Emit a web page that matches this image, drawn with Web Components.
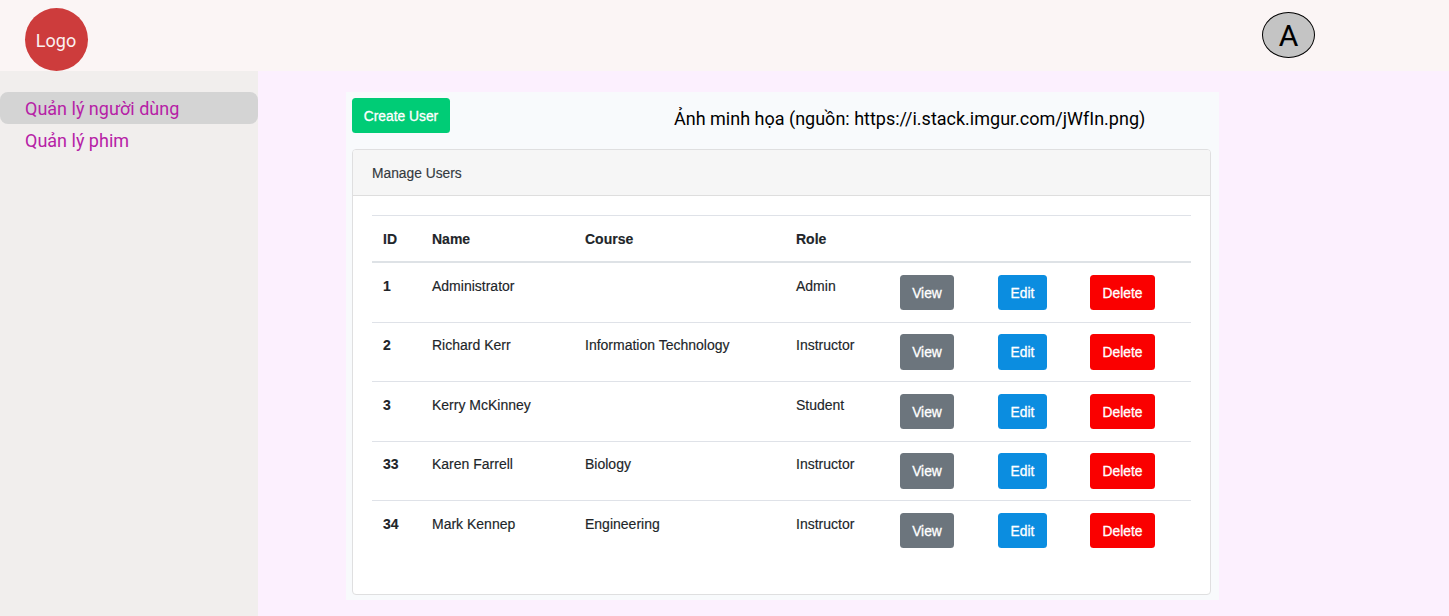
<!DOCTYPE html>
<html lang="vi">
<head>
<meta charset="utf-8">
<title>Quản lý người dùng</title>
<style>
html,body{margin:0;height:100%;overflow:hidden}
body{font-family:Roboto,"Noto Sans",sans-serif;font-size:18px}
</style>
</head>
<body>
<admin-app></admin-app>
<script>
const define = (name, html) => customElements.define(name, class extends HTMLElement {
  constructor() {
    super();
    const t = document.createElement('template');
    t.innerHTML = html;
    this.attachShadow({ mode: 'open' }).append(t.content.cloneNode(true));
  }
});

define('app-header', `
<style>
:host{box-sizing:border-box;display:flex;justify-content:space-between;align-items:flex-start;height:71px;padding:8px 134px 0 25px;background:#fbf5f5}
.logo{width:63px;height:63px;border-radius:50%;background:#cd3c3c;color:#fbf0f0;display:flex;align-items:center;justify-content:center;line-height:21px}
.logo span{padding:1px 1px 0 0}
.avatar{box-sizing:border-box;width:53px;height:46px;margin-top:4px;border:1px solid #000;border-radius:50%;background:#c4c4c4;color:#000;display:flex;align-items:center;justify-content:center;font-size:30px;line-height:44px;-webkit-text-stroke:.1px #000}
.avatar span{padding-top:1px}
</style>
<div class="logo"><span>Logo</span></div>
<div class="avatar"><span>A</span></div>`);

define('side-nav', `
<style>:host{display:block;box-sizing:border-box;width:258px;padding-top:21px;background:#f1eeed}</style>
<slot></slot>`);

define('nav-item', `
<style>
:host{display:block;box-sizing:border-box;height:32px;padding:1px 0 0 25px;line-height:32px;color:#b621a6;border-radius:8px;white-space:nowrap}
:host([active]){background:#d4d4d4}
</style>
<slot></slot>`);

define('action-button', `
<style>
:host{display:inline-flex;box-sizing:border-box;align-items:center;justify-content:center;height:35.5px;padding-top:2px;border-radius:3.5px;color:#fff;background:#6c757d;font-size:13.8px;-webkit-text-stroke:.3px #fff;white-space:nowrap;width:54px}
:host([kind=create]){width:98px;background:#00cc76}
:host([kind=edit]){width:49px;background:#0b8de0}
:host([kind=delete]){width:65px;background:#fa0000}
</style>
<slot></slot>`);

define('user-row', `
<style>
:host{box-sizing:border-box;display:grid;grid-template-columns:49px 153px 211px 104px 98px 92px 1fr;height:59.5px;border-bottom:1px solid #dfe2e8;padding-top:11.5px;font-size:14px;line-height:23px;color:#212529}
:host([head]){height:48px;padding-top:12px;border-top:1px solid #dfe2e8;border-bottom:2px solid #dee2e6;font-weight:700}
:host([last]){border-bottom:0}
span{padding-left:11px;white-space:nowrap;-webkit-text-stroke:.15px #212529}
.id{font-weight:700}
action-button{margin-left:11px}
</style>
<span class="id"><slot name="id"></slot></span>
<span><slot name="name"></slot></span>
<span><slot name="course"></slot></span>
<span><slot name="role"></slot></span>
<slot name="actions"></slot>`);

customElements.define('user-table', class extends HTMLElement {
  constructor() {
    super();
    const users = [
      ['1', 'Administrator', '', 'Admin'],
      ['2', 'Richard Kerr', 'Information Technology', 'Instructor'],
      ['3', 'Kerry McKinney', '', 'Student'],
      ['33', 'Karen Farrell', 'Biology', 'Instructor'],
      ['34', 'Mark Kennep', 'Engineering', 'Instructor']
    ];
    const cells = u => ['id', 'name', 'course', 'role'].map((k, i) => `<b slot="${k}">${u[i]}</b>`).join('');
    const actions = '<action-button slot="actions">View</action-button><action-button slot="actions" kind="edit">Edit</action-button><action-button slot="actions" kind="delete">Delete</action-button>';
    this.attachShadow({ mode: 'open' }).innerHTML = `
<style>:host{display:block}b{font-weight:inherit}action-button{margin-left:11px}</style>
<user-row head>${cells(['ID', 'Name', 'Course', 'Role'])}</user-row>
${users.map((u, i) => `<user-row${i === users.length - 1 ? ' last' : ''}>${cells(u)}${actions}</user-row>`).join('')}`;
  }
});

define('user-card', `
<style>
:host{display:flex;flex-direction:column;box-sizing:border-box;height:446px;border:1px solid #dfdfe0;border-radius:4px;background:#fff;overflow:hidden}
header{box-sizing:border-box;height:46px;flex:none;padding:1px 0 0 19px;background:#f6f6f6;border-bottom:1px solid #dedede;font-size:13.8px;line-height:45px;color:#343a3f;-webkit-text-stroke:.15px #343a3f}
main{padding:19px 19px 0}
</style>
<header><slot name="title"></slot></header>
<main><slot></slot></main>`);

define('manage-panel', `
<style>
:host{display:block;box-sizing:border-box;width:873px;height:508px;padding:5.5px 8px 0 6px;background:#f8fafc;font-family:"Liberation Sans",Arial,sans-serif}
.top{display:flex;height:51.5px;align-items:flex-start}
p{margin:0 0 0 224px;padding-top:10.5px;font:18px/21px Roboto,"Noto Sans",sans-serif;color:#000;white-space:nowrap}
</style>
<div class="top"><action-button kind="create">Create User</action-button><p>Ảnh minh họa (nguồn: https://i.stack.imgur.com/jWfIn.png)</p></div>
<user-card><span slot="title">Manage Users</span><user-table></user-table></user-card>`);

define('admin-app', `
<style>
:host{display:grid;grid-template:71px 1fr / 258px 1fr;height:100vh;background:#fcf0fe}
app-header{grid-column:1 / -1}
manage-panel{margin:21px 0 0 88px}
</style>
<app-header></app-header>
<side-nav><nav-item active>Quản lý người dùng</nav-item><nav-item>Quản lý phim</nav-item></side-nav>
<manage-panel></manage-panel>`);
</script>
</body>
</html>
